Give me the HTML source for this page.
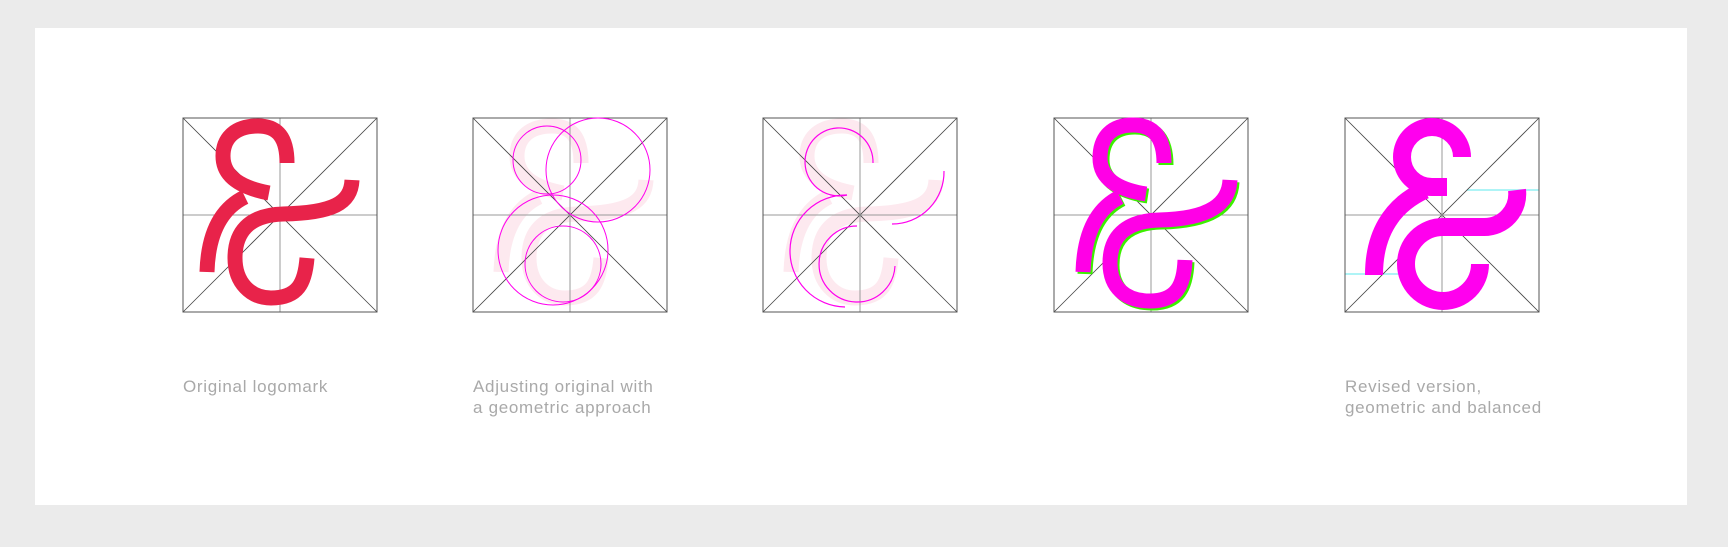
<!DOCTYPE html>
<html><head><meta charset="utf-8"><style>
html,body{margin:0;padding:0;background:#ebebeb;width:1728px;height:547px;overflow:hidden}
.card{position:absolute;left:35px;top:28px;width:1652px;height:477px;background:#fff}
.t{position:absolute;font-family:"Liberation Sans",sans-serif;font-size:17px;line-height:21px;color:#a9a9a9;letter-spacing:0.7px}
svg{position:absolute;left:0;top:0}
</style></head><body>
<div class="card"></div>
<svg width="1728" height="547" viewBox="0 0 1728 547">
<defs>
<g id="grid" fill="none">
<line x1="0" y1="0" x2="194" y2="194" stroke="#444" stroke-width="0.8"/>
<line x1="194" y1="0" x2="0" y2="194" stroke="#444" stroke-width="0.8"/>
<line x1="97" y1="0" x2="97" y2="194" stroke="#999" stroke-width="1"/>
<line x1="0" y1="97" x2="194" y2="97" stroke="#999" stroke-width="1"/>
<rect x="0" y="0" width="194" height="194" stroke="#555" stroke-width="1"/>
</g>
<g id="amp" fill="none" stroke-width="15">
<path d="M104,45 C104,20 95,8 75,8 C50,8 40,22 40,38 C40,60 60,70 86,75"/>
<path d="M62,79 C35,92 25,120 24,154"/>
<path d="M169,62 C168,85 150,95 100,96 C65,97 52,115 52,140 C52,165 68,180 88,180 C115,180 122,165 124,140"/>
</g>
</defs>
<g transform="translate(183,118)">
<use href="#grid"/>
<use href="#amp" stroke="#e8234a"/>
</g>
<g transform="translate(473,118)">
<use href="#amp" stroke="#fde9ef" transform="translate(4,0)"/>
<use href="#grid"/>
<g fill="none" stroke="#ff00ee" stroke-width="1">
<circle cx="74" cy="42" r="34"/>
<circle cx="125" cy="52" r="52"/>
<circle cx="80" cy="132" r="55"/>
<circle cx="90" cy="146" r="38"/>
</g>
</g>
<g transform="translate(763,118)">
<use href="#amp" stroke="#fde9ef" transform="translate(4,0)"/>
<use href="#grid"/>
<g fill="none" stroke="#ff00ee" stroke-width="1.2">
<path d="M110,45 A34,34 0 1 0 84,77"/>
<path d="M181,53 A52,52 0 0 1 129,106"/>
<path d="M84,77 A56,56 0 1 0 82,189"/>
<path d="M94,108 A38,38 0 1 0 132,148"/>
</g>
</g>
<g transform="translate(1054,118)">
<use href="#grid"/>
<g transform="translate(2,2)" stroke="#3cf000" fill="none" stroke-width="15">
<path d="M110,45 C110,20 100,7 79,7 C55,7 46,22 46,40 C46,62 66,72 92,76"/>
<path d="M66,79 C40,92 30,120 29,154"/>
<path d="M176,62 C175,85 157,101 105,102 C70,103 56,120 56,145 C56,170 72,183 96,183 C122,183 130,168 131,142"/>
</g>
<g stroke="#ff00e6" fill="none" stroke-width="15">
<path d="M110,45 C110,20 100,7 79,7 C55,7 46,22 46,40 C46,62 66,72 92,76"/>
<path d="M66,79 C40,92 30,120 29,154"/>
<path d="M176,62 C175,85 157,101 105,102 C70,103 56,120 56,145 C56,170 72,183 96,183 C122,183 130,168 131,142"/>
</g>
</g>
<g transform="translate(1345,118)">
<line x1="122" y1="72" x2="194" y2="72" stroke="#aef4f6" stroke-width="2"/>
<line x1="0" y1="156" x2="55" y2="156" stroke="#aef4f6" stroke-width="2"/>
<use href="#grid"/>
<g stroke="#ff00ee" fill="none" stroke-width="18">
<path d="M117,39 A30,30 0 1 0 87,69 L102,69"/>
<path d="M29,157 C29,118 45,88 80,72"/>
<path d="M172,72 A33,33 0 0 1 139,109 L98,109 A37,37 0 1 0 135,146"/>
</g>
</g>
</svg>
<div class="t" style="left:183px;top:376px">Original logomark</div>
<div class="t" style="left:473px;top:376px">Adjusting original with<br>a geometric approach</div>
<div class="t" style="left:1345px;top:376px">Revised version,<br>geometric and balanced</div>
</body></html>
